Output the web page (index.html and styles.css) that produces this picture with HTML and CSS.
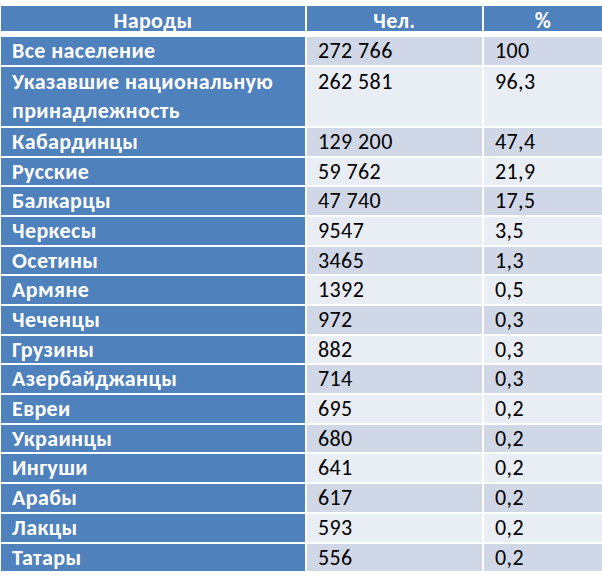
FILE: index.html
```html
<!DOCTYPE html>
<html lang="ru">
<head>
<meta charset="utf-8">
<title>Народы</title>
<link rel="stylesheet" href="styles.css">
</head>
<body>
<div class="table">
  <div class="cell head">Народы</div>
  <div class="cell head">Чел.</div>
  <div class="cell head">%</div>

  <div class="cell name">Все население</div>
  <div class="cell val odd">272 766</div>
  <div class="cell val odd">100</div>

  <div class="cell name two">Указавшие национальную принадлежность</div>
  <div class="cell val even top">262 581</div>
  <div class="cell val even top">96,3</div>

  <div class="cell name">Кабардинцы</div>
  <div class="cell val odd">129 200</div>
  <div class="cell val odd">47,4</div>

  <div class="cell name">Русские</div>
  <div class="cell val even">59 762</div>
  <div class="cell val even">21,9</div>

  <div class="cell name">Балкарцы</div>
  <div class="cell val odd">47 740</div>
  <div class="cell val odd">17,5</div>

  <div class="cell name">Черкесы</div>
  <div class="cell val even">9547</div>
  <div class="cell val even">3,5</div>

  <div class="cell name">Осетины</div>
  <div class="cell val odd">3465</div>
  <div class="cell val odd">1,3</div>

  <div class="cell name">Армяне</div>
  <div class="cell val even">1392</div>
  <div class="cell val even">0,5</div>

  <div class="cell name">Чеченцы</div>
  <div class="cell val odd">972</div>
  <div class="cell val odd">0,3</div>

  <div class="cell name">Грузины</div>
  <div class="cell val even">882</div>
  <div class="cell val even">0,3</div>

  <div class="cell name">Азербайджанцы</div>
  <div class="cell val odd">714</div>
  <div class="cell val odd">0,3</div>

  <div class="cell name">Евреи</div>
  <div class="cell val even">695</div>
  <div class="cell val even">0,2</div>

  <div class="cell name">Украинцы</div>
  <div class="cell val odd">680</div>
  <div class="cell val odd">0,2</div>

  <div class="cell name">Ингуши</div>
  <div class="cell val even">641</div>
  <div class="cell val even">0,2</div>

  <div class="cell name">Арабы</div>
  <div class="cell val odd">617</div>
  <div class="cell val odd">0,2</div>

  <div class="cell name">Лакцы</div>
  <div class="cell val even">593</div>
  <div class="cell val even">0,2</div>

  <div class="cell name">Татары</div>
  <div class="cell val odd">556</div>
  <div class="cell val odd">0,2</div>
</div>
</body>
</html>
```

FILE: styles.css
```css
html, body {
  margin: 0;
  padding: 0;
  background: #ffffff;
}

body {
  padding: 6px 0 0 1px;
  font-family: Carlito, "Open Sans", sans-serif;
  font-size: 22px;
  letter-spacing: 0.4px;
}

.table {
  display: grid;
  grid-template-columns: 304px 175px 118px;
  column-gap: 2px;
  row-gap: 2px;
  width: 601px;
}

.cell {
  height: 27.7px;
  line-height: 27.7px;
  white-space: nowrap;
  overflow: visible;
}

.head {
  background: #4f81bd;
  color: #ffffff;
  font-weight: bold;
  text-align: center;
  height: 25px;
  line-height: 30px;
  margin-bottom: 4px;
}

.name {
  background: #4f81bd;
  color: #ffffff;
  font-weight: bold;
  padding-left: 11px;
}

.name.two {
  height: auto;
  white-space: normal;
  line-height: 29.6px;
}

.val {
  color: #000000;
  padding-left: 11px;
}

.val.top {
  height: auto;
  line-height: 29.6px;
}

.odd {
  background: #d0d8e8;
}

.even {
  background: #e9edf4;
}
```
